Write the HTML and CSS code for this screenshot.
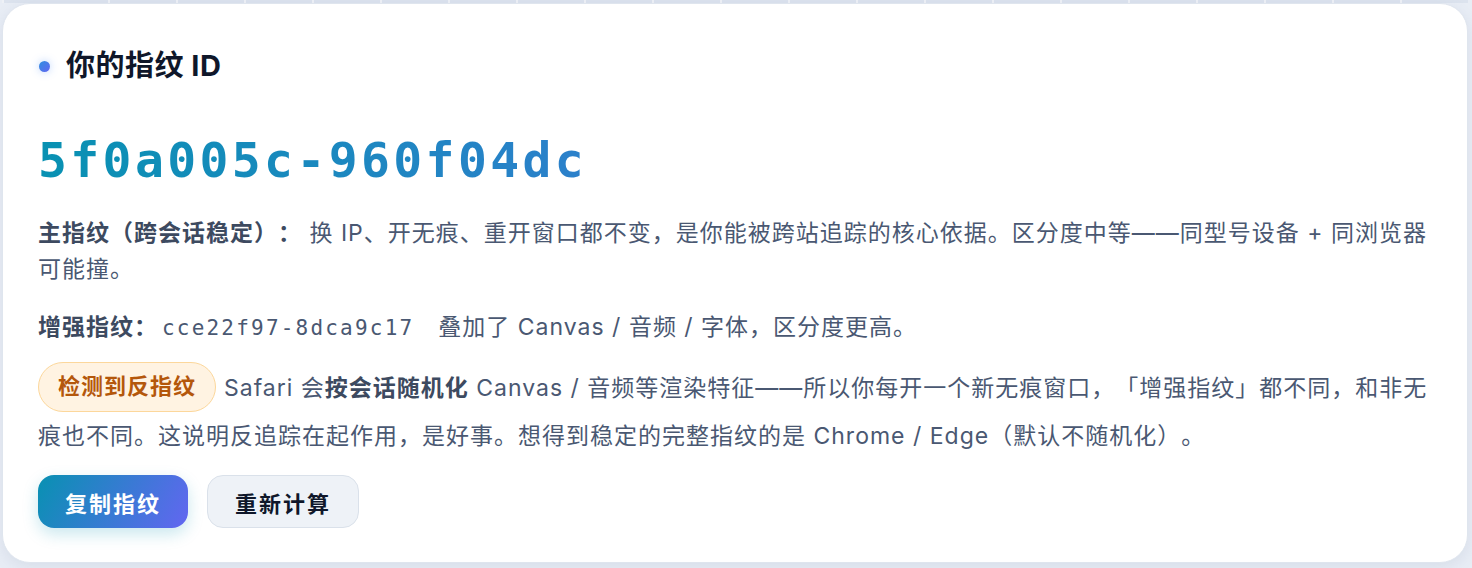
FILE: index.html
```html
<!DOCTYPE html>
<html lang="zh-CN">
<head>
<meta charset="utf-8">
<title>你的指纹 ID</title>
<link rel="stylesheet" href="styles.css">
</head>
<body>
<div class="strip"></div>
<section class="card">
  <h2 class="title"><span class="dot"></span>你的指纹 ID</h2>
  <div class="fid">5f0a005c-960f04dc</div>
  <p class="para para-main"><b>主指纹（跨会话稳定）：</b> 换 IP、开无痕、重开窗口都不变，是你能被跨站追踪的核心依据。区分度中等——同型号设备 + 同浏览器可能撞。</p>
  <p class="para para-extra"><b>增强指纹：</b><code class="mono">cce22f97-8dca9c17</code>叠加了 Canvas / 音频 / 字体，区分度更高。</p>
  <p class="para para-warn"><span class="badge">检测到反指纹</span>Safari 会<b>按会话随机化</b> Canvas / 音频等渲染特征——所以你每开一个新无痕窗口，「增强指纹」都不同，和非无痕也不同。这说明反追踪在起作用，是好事。想得到稳定的完整指纹的是 Chrome / Edge（默认不随机化）。</p>
  <div class="actions">
    <button class="btn btn-primary">复制指纹</button>
    <button class="btn btn-secondary">重新计算</button>
  </div>
</section>
</body>
</html>
```
FILE: styles.css
```css
html, body {
  margin: 0;
  padding: 0;
}
body {
  background: #e8edf5;
  font-family: "Inter", "Noto Sans CJK SC", sans-serif;
  text-spacing-trim: space-all;
  padding: 0 4px 0 2px;
  height: 568px;
  box-sizing: border-box;
  overflow: hidden;
}
.strip {
  height: 3px;
  background: repeating-linear-gradient(90deg, #dce3ee 0 66px, #eef1f6 66px 68px);
  background-position: 40px 0;
}
.card {
  background: #ffffff;
  border: 1px solid #dfe5ee;
  border-radius: 28px;
  box-shadow: 0 4px 14px rgba(100, 116, 160, 0.12);
  padding: 44px 35px 34px 35px;
  height: 560px;
  box-sizing: border-box;
}
.title {
  display: flex;
  align-items: center;
  gap: 16px;
  margin: 0;
  font-size: 29px;
  line-height: 36px;
  font-weight: 700;
  color: #0f172a;
  letter-spacing: 0.5px;
}
.dot {
  width: 11px;
  height: 11px;
  border-radius: 50%;
  background: linear-gradient(135deg, #2f8fe0, #6366f1);
  box-shadow: 0 0 8px rgba(59, 130, 246, 0.35);
  margin-left: 1px;
}
.fid {
  margin-top: 47px;
  font-family: "DejaVu Sans Mono", monospace;
  font-weight: 700;
  font-size: 48px;
  line-height: 58px;
  letter-spacing: 3.4px;
  background: linear-gradient(90deg, #0891b2, #6366f1);
  -webkit-background-clip: text;
  background-clip: text;
  color: transparent;
}
.para {
  margin: 0;
  font-size: 23px;
  line-height: 36px;
  letter-spacing: 1px;
  color: #4a5872;
}
.para b {
  font-weight: 700;
  color: #3d4a60;
}
.para-main {
  margin-top: 26px;
}
.para-extra {
  margin-top: 22px;
}
.para-warn {
  margin-top: 16px;
}
.mono {
  font-family: "DejaVu Sans Mono", monospace;
  font-size: 21px;
  letter-spacing: 2.2px;
  margin: 0 24px 0 4px;
  color: #4a5872;
}
.badge {
  display: inline-block;
  vertical-align: middle;
  box-sizing: border-box;
  height: 50px;
  line-height: 47px;
  padding: 0 19px;
  border: 1.5px solid #fcd79b;
  border-radius: 25px;
  background: #fff3e2;
  color: #b4570b;
  font-size: 22px;
  font-weight: 700;
  margin: 0 8px 6px 0;
}
.actions {
  display: flex;
  gap: 19px;
  margin-top: 21px;
}
.btn {
  height: 53px;
  padding: 0 27px;
  border-radius: 16px;
  font-family: "Inter", "Noto Sans CJK SC", sans-serif;
  font-size: 22px;
  font-weight: 700;
  letter-spacing: 2px;
  cursor: pointer;
}
.btn-primary {
  border: none;
  color: #ffffff;
  background: linear-gradient(120deg, #0891b2, #6366f1);
  box-shadow: 0 6px 16px rgba(8, 145, 178, 0.22);
}
.btn-secondary {
  border: 1.5px solid #dae1ea;
  background: #eef2f7;
  color: #0f172a;
}
```
